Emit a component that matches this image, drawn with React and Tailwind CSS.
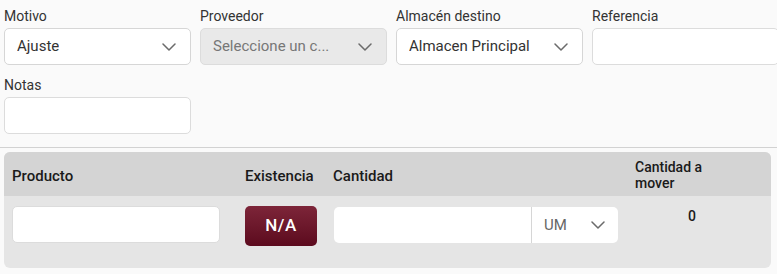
import React from 'react';

function Chevron() {
  return (
    <svg width="14" height="8" viewBox="0 0 14 8" fill="none" className="shrink-0">
      <path d="M1 1l6 6 6-6" stroke="#6b6b6b" strokeWidth="1.5" strokeLinecap="round" strokeLinejoin="round" />
    </svg>
  );
}

function Field({ label, children }) {
  return (
    <div className="flex flex-col">
      <label className="h-[18px] leading-[18px] text-[14px] text-[#333] mb-[3px]">{label}</label>
      {children}
    </div>
  );
}

function Select({ value, disabled }) {
  return (
    <div
      className={`h-[37px] rounded-[5px] border flex items-center justify-between pl-[12px] pr-[14px] text-[15px] ${
        disabled ? 'bg-[#e9e9e9] border-[#dcdcdc] text-[#777]' : 'bg-white border-[#d6d6d6] text-[#333]'
      }`}
    >
      <span className="truncate">{value}</span>
      <Chevron />
    </div>
  );
}

function Input({ className = '' }) {
  return <input type="text" className={`h-[37px] rounded-[5px] border border-[#dcdcdc] bg-white outline-none ${className}`} />;
}

export default function App() {
  return (
    <div className="w-[777px] h-[274px] overflow-hidden bg-[#fafafa]" style={{ fontFamily: 'Roboto, "Noto Sans", sans-serif' }}>
      <div className="pt-[7px] px-[4px]">
        <div className="grid grid-cols-[187px_187px_187px_187px] gap-x-[9px] gap-y-[11px]">
          <Field label="Motivo">
            <Select value="Ajuste" />
          </Field>
          <Field label="Proveedor">
            <Select value="Seleccione un c..." disabled />
          </Field>
          <Field label="Almacén destino">
            <Select value="Almacen Principal" />
          </Field>
          <Field label="Referencia">
            <Input />
          </Field>
          <Field label="Notas">
            <Input />
          </Field>
        </div>
      </div>

      <div className="mt-[13px] border-t border-[#d2d2d2]" />

      <div className="mx-[4px] mt-[4px] w-[767px] rounded-[6px] bg-[#e5e5e5] overflow-hidden">
        <div className="h-[44px] bg-[#d4d4d4] grid grid-cols-[241px_88px_302px_136px] items-end text-[15px] font-medium text-[#1a1a1a]">
          <div className="pl-[8px] pb-[11px] leading-[18px]">Producto</div>
          <div className="pb-[11px] leading-[18px]">Existencia</div>
          <div className="pb-[11px] leading-[18px]">Cantidad</div>
          <div className="pb-[5px] text-[14px] leading-[16px]">Cantidad a<br />mover</div>
        </div>
        <div className="grid grid-cols-[241px_88px_302px_136px] pt-[10px] pb-[22px] items-start">
          <div className="pl-[8px]">
            <Input className="w-[208px] block" />
          </div>
          <div>
            <button className="w-[72px] h-[40px] rounded-[5px] bg-gradient-to-b from-[#7d2539] to-[#5c0a1e] text-white text-[17px] font-medium tracking-[0.5px]">
              N/A
            </button>
          </div>
          <div className="pt-[1px] pl-[1px] flex">
            <input type="text" className="w-[197px] h-[36px] rounded-l-[5px] bg-white outline-none" />
            <div className="w-[87px] h-[36px] rounded-r-[5px] bg-white border-l border-[#d6d6d6] flex items-center justify-between pl-[12px] pr-[13px] text-[15px] text-[#666]">
              <span>UM</span>
              <Chevron />
            </div>
          </div>
          <div className="pl-[53px] pt-[1px] text-[14px] font-medium text-[#1a1a1a] leading-[18px]">0</div>
        </div>
      </div>
    </div>
  );
}
